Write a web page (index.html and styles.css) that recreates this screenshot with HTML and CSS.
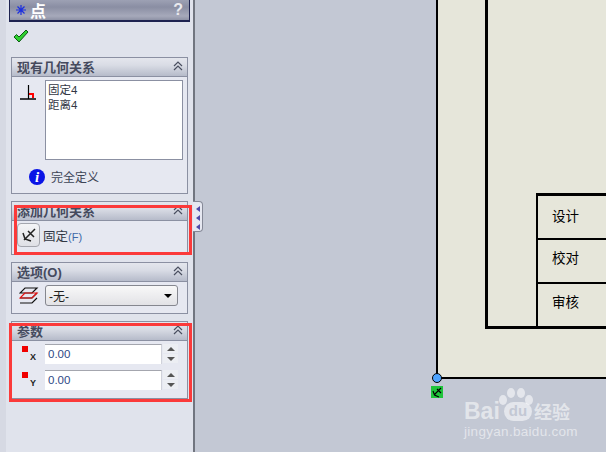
FILE: index.html
```html
<!DOCTYPE html>
<html>
	<head>
		<title>点</title>
		<link rel="stylesheet" href="styles.css">
	</head>
	<body>
		<div id="app">
			<div id="panel">
				<div class="titleBar">
					<svg class="titleStar" width="10" height="10" viewBox="0 0 10 10"><path d="M5 0V10M0 5H10M1.5 1.5L8.500 8.500M8.500 1.500L1.500 8.500" stroke="#1c2fe0" stroke-width="1.200"/></svg>
					<span class="titleText">点</span>
					<span class="titleHelp">?</span>
				</div>
				<div class="okRow">
					<svg width="16" height="14" viewBox="0 0 16 14"><path d="M1 8L3.500 5.500L6 8L13 1L15 3L6 13Z" fill="#2fd02f" stroke="#0c5a14" stroke-width="1"/></svg>
				</div>

				<div class="section sectionRelations">
					<div class="sectionHead">
						<span>现有几何关系</span>
						<svg class="chevrons" width="10" height="10" viewBox="0 0 10 10"><path d="M1 5L5 1L9 5M1 9L5 5L9 9" fill="none" stroke="#4a4f60" stroke-width="1.200"/></svg>
					</div>
					<div class="relationsBody">
						<div class="relationsRow">
							<svg class="relIcon" width="17" height="15" viewBox="0 0 17 15"><path d="M8.500 0V14" stroke="#000" stroke-width="1.200"/><path d="M0 14H16" stroke="#000" stroke-width="1.500"/><path d="M9 9H13V13" fill="none" stroke="#f00" stroke-width="2"/></svg>
							<div class="listBox">
								<div>固定4</div>
								<div>距离4</div>
							</div>
						</div>
						<div class="statusRow">
							<span class="infoIcon">i</span>
							<span>完全定义</span>
						</div>
					</div>
				</div>

				<div class="section sectionAdd">
					<div class="sectionHead">
						<span>添加几何关系</span>
						<svg class="chevrons" width="10" height="10" viewBox="0 0 10 10"><path d="M1 5L5 1L9 5M1 9L5 5L9 9" fill="none" stroke="#4a4f60" stroke-width="1.200"/></svg>
					</div>
					<div class="addBody">
						<div class="fixButton">
							<svg width="16" height="15" viewBox="0 0 16 15"><path d="M14 1L3 12M2 5L4 11L10 13M7 3L13 9" fill="none" stroke="#222" stroke-width="1.500"/></svg>
						</div>
						<span class="fixLabel">固定<span class="blueText">(F)</span></span>
					</div>
				</div>

				<div class="section sectionOptions">
					<div class="sectionHead">
						<span>选项(O)</span>
						<svg class="chevrons" width="10" height="10" viewBox="0 0 10 10"><path d="M1 5L5 1L9 5M1 9L5 5L9 9" fill="none" stroke="#4a4f60" stroke-width="1.200"/></svg>
					</div>
					<div class="optionsBody">
						<svg width="20" height="18" viewBox="0 0 20 18"><path d="M6 1H18L13 6H1Z" fill="none" stroke="#111" stroke-width="1.200"/><path d="M1 11H13L18 6" fill="none" stroke="#111" stroke-width="1.200"/><path d="M1 16H13L18 11" fill="none" stroke="#111" stroke-width="1.200"/><path d="M6 6L1 11H13L18 6Z" fill="none" stroke="#e81010" stroke-width="1.200"/></svg>
						<div class="selectBox">
							<span>-无-</span>
							<span class="selectArrow"></span>
						</div>
					</div>
				</div>

				<div class="section sectionParams">
					<div class="sectionHead">
						<span>参数</span>
						<svg class="chevrons" width="10" height="10" viewBox="0 0 10 10"><path d="M1 5L5 1L9 5M1 9L5 5L9 9" fill="none" stroke="#4a4f60" stroke-width="1.200"/></svg>
					</div>
					<div class="paramsBody">
						<div class="paramRow">
							<div class="paramIcon"><span class="redDot"></span><span class="axis">X</span></div>
							<div class="numberField">0.00</div>
							<div class="spinner"><span class="spinUp"></span><span class="spinDown"></span></div>
						</div>
						<div class="paramRow">
							<div class="paramIcon"><span class="redDot"></span><span class="axis">Y</span></div>
							<div class="numberField">0.00</div>
							<div class="spinner"><span class="spinUp"></span><span class="spinDown"></span></div>
						</div>
					</div>
				</div>

				<!-- red marks sit over the sections -->
				<div class="redMark redMarkAdd"></div>
				<div class="redMark redMarkParams"></div>
			</div>

			<div class="panelTab">
				<span></span><span></span><span></span>
			</div>

			<div id="canvas">
				<div class="sheet">
					<div class="frame">
						<div class="titleBlock">
							<div class="blockRow">设计</div>
							<div class="blockRow">校对</div>
							<div class="blockRow">审核</div>
						</div>
					</div>
				</div>
				<div class="pointDot"></div>
				<div class="pointTag">
					<svg width="11" height="11" viewBox="0 0 11 11"><path d="M9 1L2 8M1 4L2.500 8L7 10M5 2L9 6" fill="none" stroke="#000" stroke-width="1.100"/></svg>
				</div>
				<div class="watermark">
					<svg class="paw" width="34" height="24" viewBox="0 0 34 24"><ellipse cx="4" cy="12" rx="4" ry="5"/><ellipse cx="12" cy="5" rx="4" ry="5"/><ellipse cx="22" cy="5" rx="4" ry="5"/><ellipse cx="30" cy="12" rx="4" ry="5"/></svg>
					<div class="markLine"><span class="markBai">Bai</span><span class="markDu">du</span><span class="markCn">经验</span></div>
					<div class="markUrl">jingyan.baidu.com</div>
				</div>
			</div>
		</div>
	</body>
</html>
```

FILE: styles.css
```css
html, body
{
	margin: 0;
	padding: 0;
	overflow: hidden;
}

body
{
	font-size: 12px;
	font-family: "Liberation Sans", "Noto Sans CJK SC", sans-serif;
	color: #333845;
}

#app
{
	position: relative;
	display: flex;
	width: 606px;
	height: 452px;
	overflow: hidden;
}

#panel
{
	position: relative;
	flex: none;
	box-sizing: border-box;
	width: 195px;
	height: 452px;
	padding-left: 6px;
	padding-right: 2px;
	background-color: #e0e3ec;
	border-right: 2px solid #71757f;
	box-shadow: inset 6px 0 0 #d6d9e3;
}

.titleBar
{
	display: flex;
	align-items: center;
	box-sizing: border-box;
	width: 181px;
	height: 22px;
	margin-left: 3px;
	padding: 0 6px;
	background: linear-gradient(#9da1b4, #8a8ea3 35%, #a6a9ba 80%, #8d91a5);
	border-left: 1px solid #1e2350;
	border-right: 1px solid #1e2350;
	border-bottom: 2px solid #1e2350;
}

.titleStar
{
	margin-right: 4px;
}

.titleText
{
	flex: 1;
	color: #ffffff;
	font-size: 16px;
	font-weight: bold;
}

.titleHelp
{
	color: #e9e9ee;
	font-size: 16px;
	font-weight: bold;
}

.okRow
{
	height: 35px;
	padding: 7px 0 0 7px;
	box-sizing: border-box;
}

.section
{
	box-sizing: border-box;
	width: 177px;
	margin-left: 5px;
	background-color: #e6e8f1;
	border: 1px solid #8b90a2;
}

.sectionHead
{
	display: flex;
	align-items: center;
	justify-content: space-between;
	box-sizing: border-box;
	height: 19px;
	padding: 0 4px 2px 5px;
	background: linear-gradient(#e4e6ed, #d9dce5 40%, #b6bbca);
	border-bottom: 1px solid #8b90a2;
	color: #454a5e;
	font-size: 13px;
	font-weight: bold;
}

.sectionRelations
{
	height: 137px;
}

.sectionAdd
{
	height: 54px;
	margin-top: 7px;
}

.sectionOptions
{
	height: 52px;
	margin-top: 7px;
}

.sectionParams
{
	height: 78px;
	margin-top: 7px;
}

.relationsBody
{
	padding-top: 3px;
}

.relationsRow
{
	display: flex;
	align-items: flex-start;
}

.relIcon
{
	margin: 5px 0 0 8px;
}

.listBox
{
	box-sizing: border-box;
	width: 138px;
	height: 80px;
	margin-left: 8px;
	padding: 2px 2px;
	background-color: #ffffff;
	border: 1px solid #8b90a2;
	color: #333845;
	font-size: 11.500px;
	line-height: 15px;
}

.statusRow
{
	display: flex;
	align-items: center;
	gap: 6px;
	margin: 8px 0 0 17px;
	font-size: 12px;
	color: #3c4456;
}

.infoIcon
{
	display: block;
	width: 16px;
	height: 16px;
	border-radius: 50%;
	background-color: #0a14e6;
	color: #ffffff;
	font-family: "Liberation Serif", serif;
	font-size: 15px;
	font-weight: bold;
	font-style: italic;
	line-height: 16px;
	text-align: center;
}

.addBody
{
	display: flex;
	align-items: center;
	gap: 3px;
	padding: 2px 0 0 5px;
}

.fixButton
{
	display: flex;
	align-items: center;
	justify-content: center;
	box-sizing: border-box;
	width: 23px;
	height: 24px;
	background: linear-gradient(#f4f4f6, #dfe0e6);
	border: 1px solid #a4a6ae;
	border-radius: 4px;
}

.fixLabel
{
	color: #333845;
	font-size: 12.500px;
}

.blueText
{
	color: #3d68a8;
	font-size: 11px;
}

.optionsBody
{
	display: flex;
	align-items: center;
	gap: 6px;
	padding: 3px 0 0 7px;
}

.selectBox
{
	display: flex;
	align-items: center;
	justify-content: space-between;
	box-sizing: border-box;
	width: 133px;
	height: 21px;
	padding: 0 5px 0 3px;
	background: linear-gradient(#f8f8f8, #e2e2e6);
	border: 1px solid #85878f;
	border-radius: 3px;
	color: #222;
	font-size: 12px;
}

.selectArrow
{
	width: 0;
	height: 0;
	border-left: 4px solid transparent;
	border-right: 4px solid transparent;
	border-top: 4px solid #000;
}

.paramsBody
{
	padding-top: 3px;
}

.paramRow
{
	display: flex;
	height: 26px;
}

.paramIcon
{
	position: relative;
	width: 33px;
	height: 22px;
}

.redDot
{
	position: absolute;
	left: 10px;
	top: 2px;
	width: 6px;
	height: 6px;
	background-color: #f00000;
}

.axis
{
	position: absolute;
	left: 18px;
	top: 8px;
	color: #222;
	font-size: 9px;
	font-weight: bold;
}

.numberField
{
	box-sizing: border-box;
	width: 117px;
	height: 20px;
	padding: 2px 3px;
	background-color: #ffffff;
	border-top: 1px solid #a4a6ae;
	border-right: 1px solid #d0d2da;
	color: #2e4a86;
	font-size: 11.500px;
	line-height: 15px;
}

.spinner
{
	display: flex;
	flex-direction: column;
	gap: 1px;
	width: 15px;
	margin-left: 1px;
}

.spinUp, .spinDown
{
	display: flex;
	align-items: center;
	justify-content: center;
	height: 9px;
	background-color: #eceef3;
}

.spinUp::after
{
	content: "";
	border-left: 4px solid transparent;
	border-right: 4px solid transparent;
	border-bottom: 4px solid #555;
}

.spinDown::after
{
	content: "";
	border-left: 4px solid transparent;
	border-right: 4px solid transparent;
	border-top: 4px solid #555;
}

.redMark
{
	position: absolute;
	box-sizing: border-box;
	border: 3px solid #fb3a3a;
}

.redMarkAdd
{
	left: 14px;
	top: 205px;
	width: 178px;
	height: 50px;
}

.redMarkParams
{
	left: 9px;
	top: 323px;
	width: 183px;
	height: 79px;
}

.panelTab
{
	position: absolute;
	z-index: 2;
	left: 193px;
	top: 201px;
	display: flex;
	flex-direction: column;
	align-items: center;
	gap: 3px;
	box-sizing: border-box;
	width: 10px;
	height: 31px;
	padding-top: 4px;
	background-color: #e6e8f1;
	border: 1px solid #858997;
	border-left: 0;
	border-radius: 0 4px 4px 0;
}

.panelTab span
{
	width: 0;
	height: 0;
	border-top: 3px solid transparent;
	border-bottom: 3px solid transparent;
	border-right: 4px solid #4f4aa8;
}

#canvas
{
	position: relative;
	flex: 1;
	background-color: #c3c8d4;
	overflow: hidden;
}

.sheet
{
	box-sizing: border-box;
	display: flex;
	width: 400px;
	height: 379px;
	margin-left: 241px;
	padding: 0 0 48px 47px;
	background-color: #e6e6da;
	border-left: 2px solid #000;
	border-bottom: 2px solid #000;
}

.frame
{
	flex: 1;
	padding: 193px 0 0 48px;
	border-left: 3px solid #000;
	border-bottom: 3px solid #000;
}

.titleBlock
{
	box-sizing: border-box;
	height: 134px;
	border-left: 2px solid #000;
	border-top: 3px solid #000;
}

.blockRow
{
	box-sizing: border-box;
	height: 44px;
	padding: 8px 0 0 14px;
	border-bottom: 2px solid #000;
	color: #000;
	font-family: "Noto Sans CJK SC", sans-serif;
	font-size: 13.500px;
	line-height: 18px;
}

.blockRow:first-child
{
	padding-top: 10px;
}

.blockRow:last-child
{
	border-bottom: 0;
}

.pointDot
{
	position: absolute;
	left: 237px;
	top: 373px;
	box-sizing: border-box;
	width: 10px;
	height: 10px;
	background-color: #4da3ff;
	border: 1px solid #000;
	border-radius: 50%;
}

.pointTag
{
	position: absolute;
	left: 236px;
	top: 386px;
	display: flex;
	width: 12px;
	height: 12px;
	align-items: center;
	justify-content: center;
	background-color: #1fc43a;
}

.watermark
{
	position: absolute;
	left: 269px;
	top: 386px;
	width: 112px;
	color: rgba(255, 255, 255, 0.55);
}

.paw
{
	position: absolute;
	left: 35px;
	top: 2px;
	fill: rgba(255, 255, 255, 0.55);
}

.markLine
{
	display: flex;
	align-items: center;
	height: 22px;
	margin-top: 14px;
}

.markBai
{
	font-size: 23px;
	font-weight: bold;
	width: 39px;
}

.markDu
{
	display: block;
	width: 28px;
	height: 19px;
	margin-left: 1px;
	background-color: rgba(255, 255, 255, 0.55);
	border-radius: 10px;
	color: #c3c8d4;
	font-size: 15px;
	font-weight: bold;
	line-height: 18px;
	text-align: center;
}

.markCn
{
	margin-left: 2px;
	font-family: "Noto Sans CJK SC", sans-serif;
	font-size: 18px;
	font-weight: bold;
	white-space: nowrap;
}

.markUrl
{
	margin-top: 2px;
	font-size: 13.500px;
	letter-spacing: 0.300px;
	white-space: nowrap;
}
```
